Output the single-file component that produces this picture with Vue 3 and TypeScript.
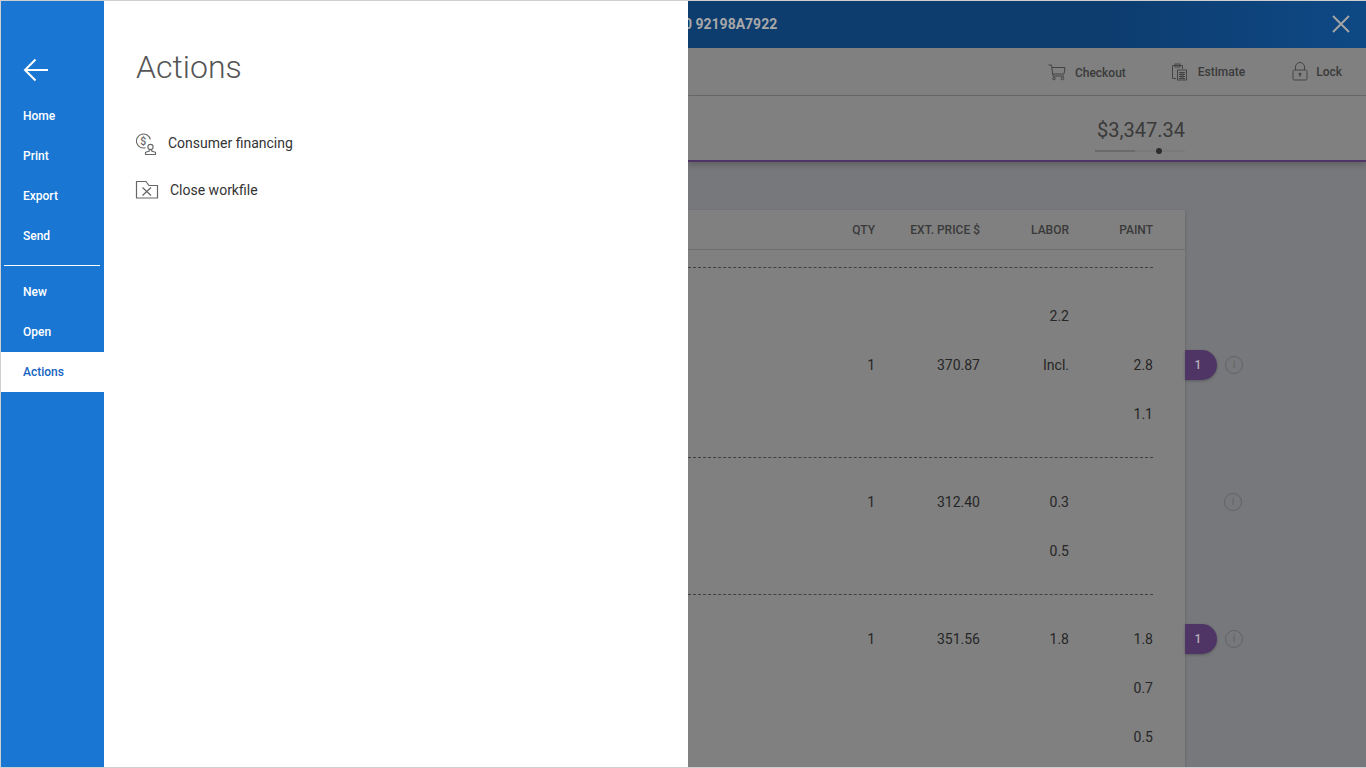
<script setup lang="ts">
interface Row { qty?: string; price?: string; labor?: string; paint?: string; pill?: boolean; info?: boolean }
interface Section { first?: boolean; rows: Row[] }

const topNav: string[] = ['Home', 'Print', 'Export', 'Send']
const lowerNav: string[] = ['New', 'Open', 'Actions']

const sections: Section[] = [
  { first: true, rows: [
    { labor: '2.2' },
    { qty: '1', price: '370.87', labor: 'Incl.', paint: '2.8', pill: true, info: true },
    { paint: '1.1' },
  ] },
  { rows: [
    { qty: '1', price: '312.40', labor: '0.3', info: true },
    { labor: '0.5' },
  ] },
  { rows: [
    { qty: '1', price: '351.56', labor: '1.8', paint: '1.8', pill: true, info: true },
    { paint: '0.7' },
    { paint: '0.5' },
  ] },
]
</script>

<template>
  <div class="screen">
    <nav class="rail">
      <button class="back" aria-label="Back">
        <svg width="26" height="24" viewBox="0 0 26 24" fill="none" stroke="#fff" stroke-width="2">
          <path d="M25 12H2M12.5 1.5 2 12l10.5 10.5" />
        </svg>
      </button>
      <a v-for="n in topNav" :key="n" class="rail-item">{{ n }}</a>
      <div class="rail-rule"></div>
      <a v-for="n in lowerNav" :key="n" class="rail-item" :class="{ active: n === 'Actions' }">{{ n }}</a>
    </nav>

    <section class="panel">
      <h1 class="title">Actions</h1>
      <div class="action first-action">
        <svg class="ico-fin" width="22" height="24" viewBox="0 0 22 24" fill="none" stroke="#666" stroke-width="1.1">
          <path d="M9.5 16.700A7 7 0 1 1 14.300 8.500" />
          <text x="4.300" y="13.800" font-size="10.500" font-weight="500" font-family="Roboto" fill="#666" stroke="none">$</text>
          <circle cx="14.500" cy="16" r="2.600" />
          <path d="M13.300 18.800v1.200L9.500 21.300v2.200h10v-2.200L15.700 20v-1.200" />
        </svg>
        <span>Consumer financing</span>
      </div>
      <div class="action">
        <svg class="ico-folder" width="24" height="20" viewBox="0 0 24 20" fill="none" stroke="#666" stroke-width="1.2">
          <path d="M1.500 18V1.500h9.500l3 4h8.500V18z" stroke-linejoin="round" />
          <path d="M7.500 7.500l8.500 8M16 7.500l-8.500 8" />
        </svg>
        <span>Close workfile</span>
      </div>
    </section>

    <main class="behind">
      <header class="topbar">
        <span class="ref">0 92198A7922</span>
        <svg class="close" width="20" height="20" viewBox="0 0 20 20" stroke="#a3a3a3" stroke-width="2" fill="none">
          <path d="M2 2l16 16M18 2 2 18" />
        </svg>
      </header>

      <div class="toolbar">
        <div class="tool tool-cart">
          <svg width="18" height="17" viewBox="0 0 18 17" fill="none" stroke="#444" stroke-width="1">
            <path d="M0.500 1h3l1.500 11h11" />
            <path d="M3.800 3.500h13.200l-1 6.500H4.800" />
            <circle cx="6" cy="14.500" r="1.300" />
            <circle cx="14.500" cy="14.500" r="1.300" />
          </svg>
          <span>Checkout</span>
        </div>
        <div class="tool tool-est">
          <svg width="17" height="18" viewBox="0 0 17 18" fill="none" stroke="#444" stroke-width="1">
            <path d="M5 15.500H1.500V2.500h10V6" />
            <rect x="4" y="1" width="5" height="3" />
            <rect x="6.500" y="7" width="9" height="10" />
            <path d="M8 9.500h6M8 11.500h6M8 13.500h6M8 15.500h6M10 9.500v6.500M12 9.500v6.500" />
          </svg>
          <span>Estimate</span>
        </div>
        <div class="tool tool-lock">
          <svg width="16" height="19" viewBox="0 0 16 19" fill="none" stroke="#444" stroke-width="1">
            <rect x="1" y="8" width="14" height="10" rx="1.500" />
            <path d="M3.500 8V5a4.500 4.500 0 0 1 9 0v3" />
            <circle cx="8" cy="12" r="1" fill="#444" />
            <path d="M8 12v3" />
          </svg>
          <span>Lock</span>
        </div>
      </div>

      <div class="totals">
        <div class="total">
          <div class="amount">$3,347.34</div>
          <div class="track"><i class="track-fill"></i><i class="track-dot"></i></div>
        </div>
      </div>

      <div class="card">
        <div class="grid head">
          <span></span><span>QTY</span><span>EXT. PRICE $</span><span>LABOR</span><span>PAINT</span>
        </div>
        <div v-for="(s, i) in sections" :key="i" class="section" :class="{ first: s.first }">
          <div v-for="(r, j) in s.rows" :key="j" class="grid row">
            <span></span><span>{{ r.qty }}</span><span>{{ r.price }}</span><span>{{ r.labor }}</span><span>{{ r.paint }}</span>
            <span v-if="r.pill" class="pill">1</span>
            <span v-if="r.info" class="info" :class="{ shifted: !r.pill }">i</span>
          </div>
        </div>
      </div>
    </main>
  </div>
</template>

<style>
html, body { margin: 0; overflow: hidden; }
</style>

<style scoped>
.screen {
  width: 1366px;
  height: 768px;
  box-sizing: border-box;
  border-top: 1px solid #cfcfcf;
  border-left: 1px solid #cfcfcf;
  border-bottom: 1px solid #cfcfcf;
  display: flex;
  overflow: hidden;
  font-family: Roboto, "Liberation Sans", sans-serif;
  background: #76787b;
}
.rail {
  width: 103px;
  flex: none;
  background: #1976d2;
  display: flex;
  flex-direction: column;
  padding-top: 55px;
}
.back {
  background: none;
  border: 0;
  padding: 2px 0 0 22px;
  height: 40px;
  box-sizing: border-box;
  display: flex;
  align-items: flex-start;
}
.back svg { display: block; }
.rail-item {
  height: 40px;
  display: flex;
  align-items: center;
  padding-left: 22px;
  font-size: 12px;
  font-weight: 500;
  color: #fff;
}
.rail-item.active { background: #fff; color: #1565c0; }
.rail-rule { height: 1px; background: #fff; margin: 9px 4px 6px 3px; }
.panel {
  width: 584px;
  flex: none;
  background: #fff;
  padding: 0 0 0 32px;
  box-sizing: border-box;
}
.title {
  margin: 46px 0 0;
  font-size: 32px;
  line-height: 40px;
  font-weight: 300;
  color: #555;
}
.action {
  display: flex;
  align-items: center;
  height: 47px;
  font-size: 14px;
  color: #333;
}
.first-action { margin-top: 32px; }
.ico-fin { margin-right: 10px; }
.ico-folder { margin-right: 11px; margin-left: -1px; }
.behind {
  flex: 1;
  min-width: 0;
  display: flex;
  flex-direction: column;
  overflow: hidden;
}
.topbar {
  height: 47px;
  flex: none;
  box-sizing: border-box;
  padding-bottom: 1px;
  display: flex;
  align-items: center;
  justify-content: space-between;
  padding-right: 15px;
  background: linear-gradient(90deg, #0d3c6e 0%, #0d3c6e 60%, #0e4985 100%);
}
.ref {
  margin-left: -4px;
  font-size: 14px;
  font-weight: 700;
  color: #a8a8a8;
}
.toolbar {
  height: 48px;
  box-sizing: border-box;
  flex: none;
  display: flex;
  justify-content: flex-end;
  align-items: center;
  padding-right: 24px;
  background: #808080;
  border-bottom: 1px solid #6a6a6a;
}
.tool {
  display: flex;
  align-items: center;
  font-size: 12px;
  font-weight: 500;
  color: #3a3a3a;
}
.tool-cart { margin-right: 45px; gap: 9px; padding-top: 2px; }
.tool-est { margin-right: 47px; gap: 10px; }
.tool-lock { gap: 8px; }
.totals {
  height: 66px;
  flex: none;
  box-sizing: border-box;
  background: #808080;
  border-bottom: 2px solid #4f3565;
  box-shadow: 0 3px 6px rgba(0, 0, 0, 0.2);
  display: flex;
  justify-content: flex-end;
  padding-right: 181px;
  position: relative;
}
.total { width: 88px; }
.amount {
  margin-top: 22px;
  font-size: 20px;
  line-height: 24px;
  color: #3a3a3a;
  white-space: nowrap;
}
.track {
  position: relative;
  width: 90px;
  height: 2px;
  margin: 8px 0 0 -2px;
  background: #7a7a7a;
}
.track-fill { position: absolute; left: 0; top: 0; width: 40px; height: 2px; background: #6a6a6a; }
.track-dot {
  position: absolute;
  left: 61px;
  top: -2px;
  width: 6px;
  height: 6px;
  border-radius: 50%;
  background: #2e2e2e;
}
.card {
  width: 497px;
  margin-top: 48px;
  flex: none;
  background: #808080;
  box-shadow: 0 1px 3px rgba(0, 0, 0, 0.2);
  padding-bottom: 40px;
}
.grid {
  display: grid;
  grid-template-columns: 1fr 60px 105px 89px 84px;
  padding-right: 32px;
  text-align: right;
  align-items: center;
  position: relative;
}
.head {
  height: 39px;
  font-size: 12px;
  font-weight: 500;
  color: #3a3a3a;
  border-bottom: 1px solid #6e6e6e;
  margin-bottom: 17px;
}
.section {
  border-top: 1px dashed #404040;
  margin-right: 32px;
  padding-top: 19px;
  padding-bottom: 19px;
}
.section.first { padding-top: 23px; }
.row {
  height: 49px;
  margin-right: -32px;
  font-size: 14px;
  color: #262626;
}
.pill {
  position: absolute;
  left: 100%;
  top: 10px;
  width: 26px;
  padding-right: 6px;
  height: 30px;
  border-radius: 0 15px 15px 0;
  background: #4f3565;
  color: #b5aebc;
  font-size: 12px;
  line-height: 30px;
  text-align: center;
  font-weight: 500;
  box-shadow: 0 1px 3px rgba(0, 0, 0, 0.25);
}
.info {
  position: absolute;
  left: calc(100% + 40px);
  top: 16px;
  width: 16px;
  height: 16px;
  border: 1px solid #636363;
  border-radius: 50%;
  color: #636363;
  font-size: 11px;
  line-height: 16px;
  text-align: center;
}
.info.shifted { left: calc(100% + 39px); }
</style>
